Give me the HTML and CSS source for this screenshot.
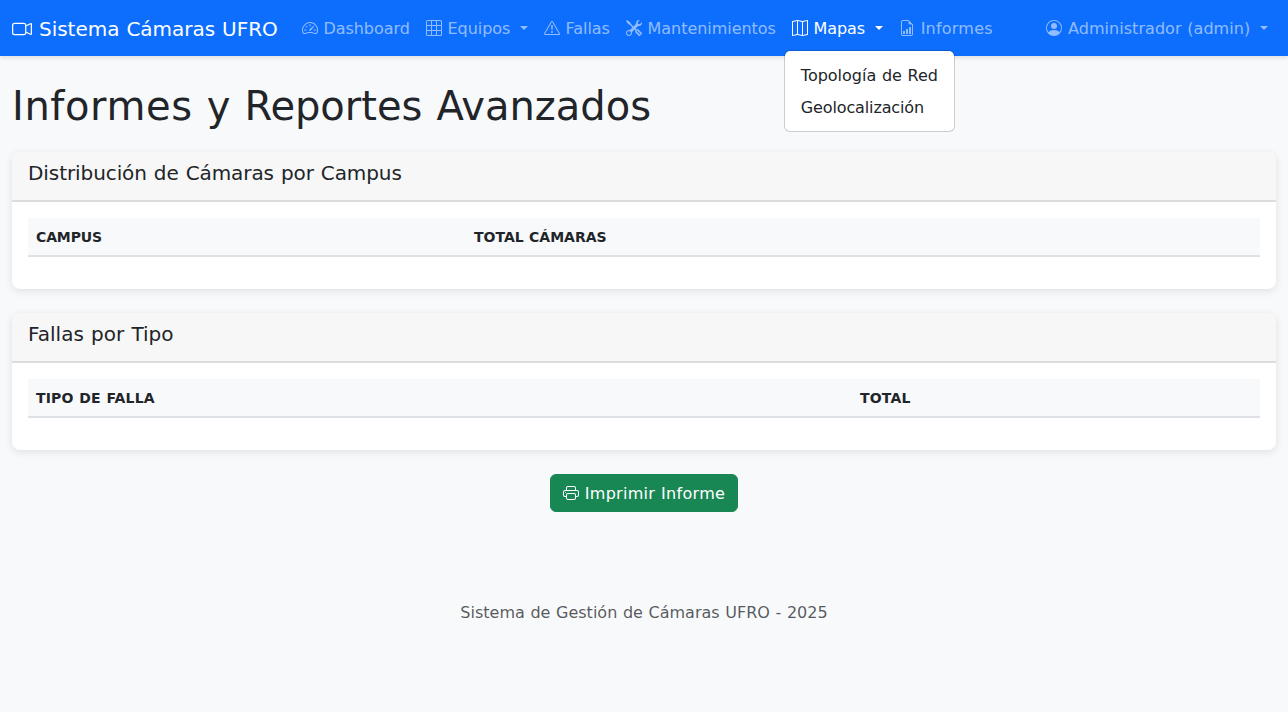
FILE: index.html
```html
<!DOCTYPE html>
<html lang="es">
<head>
<meta charset="utf-8">
<title>Informes y Reportes Avanzados</title>
<link rel="stylesheet" href="styles.css">
</head>
<body>
<nav class="navbar">
  <a class="brand"><svg class="bi" viewBox="0 0 16 16"><path fill-rule="evenodd" d="M0 5a2 2 0 0 1 2-2h7.5a2 2 0 0 1 1.983 1.738l3.11-1.382A1 1 0 0 1 16 4.269v7.462a1 1 0 0 1-1.406.913l-3.111-1.382A2 2 0 0 1 9.5 13H2a2 2 0 0 1-2-2zm11.5 5.175 3.5 1.556V4.269l-3.5 1.556zM2 4a1 1 0 0 0-1 1v6a1 1 0 0 0 1 1h7.5a1 1 0 0 0 1-1V5a1 1 0 0 0-1-1z"/></svg> Sistema Cámaras UFRO</a>
  <ul class="nav-list main-nav">
    <li><a class="nav-link"><svg class="bi" viewBox="0 0 16 16"><path d="M8 4a.5.5 0 0 1 .5.5V6a.5.5 0 0 1-1 0V4.5A.5.5 0 0 1 8 4M3.732 5.732a.5.5 0 0 1 .707 0l.915.914a.5.5 0 1 1-.708.708l-.914-.915a.5.5 0 0 1 0-.707M2 10a.5.5 0 0 1 .5-.5h1.586a.5.5 0 0 1 0 1H2.5A.5.5 0 0 1 2 10m9.5 0a.5.5 0 0 1 .5-.5h1.5a.5.5 0 0 1 0 1H12a.5.5 0 0 1-.5-.5m.754-4.246a.39.39 0 0 0-.527-.02L7.547 9.31a.91.91 0 1 0 1.302 1.258l3.434-4.297a.39.39 0 0 0-.029-.518z"/><path fill-rule="evenodd" d="M0 10a8 8 0 1 1 15.547 2.661c-.442 1.253-1.845 1.602-2.932 1.25C11.309 13.488 9.475 13 8 13c-1.474 0-3.31.488-4.615.911-1.087.352-2.49.003-2.932-1.25A8 8 0 0 1 0 10m8-7a7 7 0 0 0-6.603 9.329c.203.575.923.876 1.68.63C4.397 12.533 6.358 12 8 12s3.604.532 4.923.96c.757.245 1.477-.056 1.68-.631A7 7 0 0 0 8 3"/></svg> Dashboard</a></li>
    <li><a class="nav-link toggle"><svg class="bi" viewBox="0 0 16 16"><path d="M0 1.5A1.5 1.5 0 0 1 1.5 0h13A1.5 1.5 0 0 1 16 1.5v13a1.5 1.5 0 0 1-1.5 1.5h-13A1.5 1.5 0 0 1 0 14.5zM1.5 1a.5.5 0 0 0-.5.5V5h4V1zM5 6H1v4h4zm1 4h4V6H6zm-1 1H1v3.5a.5.5 0 0 0 .5.5H5zm1 0v4h4v-4zm5 0v4h3.5a.5.5 0 0 0 .5-.5V11zm0-1h4V6h-4zm0-5h4V1.5a.5.5 0 0 0-.5-.5H11zm-1 0V1H6v4z"/></svg> Equipos </a></li>
    <li><a class="nav-link"><svg class="bi" viewBox="0 0 16 16"><path d="M7.938 2.016A.13.13 0 0 1 8.002 2a.13.13 0 0 1 .063.016.15.15 0 0 1 .054.057l6.857 11.667c.036.06.035.124.002.183a.2.2 0 0 1-.054.06.1.1 0 0 1-.066.017H1.146a.1.1 0 0 1-.066-.017.2.2 0 0 1-.054-.06.18.18 0 0 1 .002-.183L7.884 2.073a.15.15 0 0 1 .054-.057m1.044-.45a1.13 1.13 0 0 0-1.96 0L.165 13.233c-.457.778.091 1.767.98 1.767h13.713c.889 0 1.438-.99.98-1.767z"/><path d="M7.002 12a1 1 0 1 1 2 0 1 1 0 0 1-2 0M7.1 5.995a.905.905 0 1 1 1.8 0l-.35 3.507a.552.552 0 0 1-1.1 0z"/></svg> Fallas</a></li>
    <li><a class="nav-link"><svg class="bi" viewBox="0 0 16 16"><path d="M1 0 0 1l2.2 3.081a1 1 0 0 0 .815.419h.07a1 1 0 0 1 .708.293l2.675 2.675-2.617 2.654A3.003 3.003 0 0 0 0 13a3 3 0 1 0 5.878-.851l2.654-2.617.968.968-.305.914a1 1 0 0 0 .242 1.023l3.27 3.27a.997.997 0 0 0 1.414 0l1.586-1.586a.997.997 0 0 0 0-1.414l-3.27-3.27a1 1 0 0 0-1.023-.242L10.5 9.5l-.96-.96 2.68-2.643A3.005 3.005 0 0 0 16 3q0-.405-.102-.777l-2.14 2.141L12 4l-.364-1.757L13.777.102a3 3 0 0 0-3.675 3.68L7.462 6.46 4.793 3.793a1 1 0 0 1-.293-.707v-.071a1 1 0 0 0-.419-.814zm9.646 10.646a.5.5 0 0 1 .708 0l2.914 2.915a.5.5 0 0 1-.707.707l-2.915-2.914a.5.5 0 0 1 0-.708M3 11l.471.242.529.026.287.445.445.287.026.529L5 13l-.242.471-.026.529-.445.287-.287.445-.529.026L3 15l-.471-.242L2 14.732l-.287-.445L1.268 14l-.026-.529L1 13l.242-.471.026-.529.445-.287.287-.445.529-.026z"/></svg> Mantenimientos</a></li>
    <li class="dropdown"><a class="nav-link toggle show"><svg class="bi" viewBox="0 0 16 16"><path fill-rule="evenodd" d="M15.817.113A.5.5 0 0 1 16 .5v14a.5.5 0 0 1-.402.49l-5 1a.5.5 0 0 1-.196 0L5.5 15.01l-4.902.98A.5.5 0 0 1 0 15.5v-14a.5.5 0 0 1 .402-.49l5-1a.5.5 0 0 1 .196 0L10.5.99l4.902-.98a.5.5 0 0 1 .415.103M10 1.91l-4-.8v12.98l4 .8zm1 12.98 4-.8V1.11l-4 .8zm-6-.8V1.11l-4 .8v12.98z"/></svg> Mapas </a>
      <ul class="menu">
        <li class="menu-item">Topología de Red</li>
        <li class="menu-item geo">Geolocalización</li>
      </ul>
    </li>
    <li><a class="nav-link reports"><svg class="bi" viewBox="0 0 16 16"><path d="M10 13.5a.5.5 0 0 0 .5.5h1a.5.5 0 0 0 .5-.5v-6a.5.5 0 0 0-.5-.5h-1a.5.5 0 0 0-.5.5zm-2.5.5a.5.5 0 0 1-.5-.5v-4a.5.5 0 0 1 .5-.5h1a.5.5 0 0 1 .5.5v4a.5.5 0 0 1-.5.5zm-3 0a.5.5 0 0 1-.5-.5v-2a.5.5 0 0 1 .5-.5h1a.5.5 0 0 1 .5.5v2a.5.5 0 0 1-.5.5z"/><path d="M14 14V4.5L9.5 0H4a2 2 0 0 0-2 2v12a2 2 0 0 0 2 2h8a2 2 0 0 0 2-2M9.5 3A1.5 1.5 0 0 0 11 4.5h2V14a1 1 0 0 1-1 1H4a1 1 0 0 1-1-1V2a1 1 0 0 1 1-1h5.5z"/></svg> Informes</a></li>
  </ul>
  <ul class="nav-list user">
    <li><a class="nav-link toggle"><svg class="bi" viewBox="0 0 16 16"><path d="M11 6a3 3 0 1 1-6 0 3 3 0 0 1 6 0"/><path fill-rule="evenodd" d="M0 8a8 8 0 1 1 16 0A8 8 0 0 1 0 8m8-7a7 7 0 0 0-5.468 11.37C3.242 11.226 4.805 10 8 10s4.757 1.225 5.468 2.37A7 7 0 0 0 8 1"/></svg> Administrador (admin) </a></li>
  </ul>
</nav>
<main class="container">
  <h1 class="title"><span class="title-lead">Informes</span> y Reportes Avanzados</h1>
  <section class="card">
    <div class="card-header"><h5 class="card-title campus-title">Distribución de Cámaras por Campus</h5></div>
    <div class="card-body">
      <table class="table campus-table"><thead><tr><th>Campus</th><th>Total Cámaras</th></tr></thead><tbody></tbody></table>
    </div>
  </section>
  <section class="card">
    <div class="card-header"><h5 class="card-title">Fallas por Tipo</h5></div>
    <div class="card-body">
      <table class="table faults-table"><thead><tr><th>Tipo de Falla</th><th>Total</th></tr></thead><tbody></tbody></table>
    </div>
  </section>
  <div class="actions">
    <button class="btn"><svg class="bi" viewBox="0 0 16 16"><path d="M2.5 8a.5.5 0 1 0 0-1 .5.5 0 0 0 0 1"/><path d="M5 1a2 2 0 0 0-2 2v2H2a2 2 0 0 0-2 2v3a2 2 0 0 0 2 2h1v1a2 2 0 0 0 2 2h6a2 2 0 0 0 2-2v-1h1a2 2 0 0 0 2-2V7a2 2 0 0 0-2-2h-1V3a2 2 0 0 0-2-2zM4 3a1 1 0 0 1 1-1h6a1 1 0 0 1 1 1v2H4zm1 5a2 2 0 0 0-2 2v1H2a1 1 0 0 1-1-1V7a1 1 0 0 1 1-1h12a1 1 0 0 1 1 1v3a1 1 0 0 1-1 1h-1v-1a2 2 0 0 0-2-2zm7 2v3a1 1 0 0 1-1 1H5a1 1 0 0 1-1-1v-3a1 1 0 0 1 1-1h6a1 1 0 0 1 1 1"/></svg> Imprimir Informe</button>
  </div>
</main>
<footer class="footer">Sistema de Gestión de Cámaras UFRO - 2025</footer>
</body>
</html>
```
FILE: styles.css
```css
*, *::before, *::after { box-sizing: border-box; }

body {
  margin: 0;
  font-family: Verdana, "DejaVu Sans", sans-serif;
  font-size: 16px;
  line-height: 1.5;
  word-spacing: 0.55px;
  color: #212529;
  background: #f8f9fa;
}

ul { list-style: none; margin: 0; padding: 0; }

.bi {
  width: 1em;
  height: 1em;
  fill: currentColor;
  vertical-align: -0.125em;
}

/* Navigation */
.navbar {
  display: flex;
  align-items: center;
  height: 56px;
  padding: 8px 12px;
  background: #0d6efd;
  box-shadow: 0 2px 4px rgba(0, 0, 0, 0.1);
}

.brand {
  margin-right: 16px;
  padding-top: 2px;
  font-size: 20px;
  letter-spacing: -0.02px;
  word-spacing: 0.65px;
  color: #fff;
  white-space: nowrap;
}

.nav-list { display: flex; }
.main-nav { letter-spacing: -0.04px; }
.user { margin-left: auto; letter-spacing: 0.05px; }

.nav-link {
  display: block;
  padding: 9px 8px 7px;
  color: rgba(255, 255, 255, 0.55);
  white-space: nowrap;
}

.nav-link.show { color: #fff; }
.reports { letter-spacing: 0.22px; }

.toggle::after {
  content: "";
  display: inline-block;
  margin-left: 0.255em;
  vertical-align: 0.255em;
  border-top: 0.3em solid;
  border-right: 0.3em solid transparent;
  border-left: 0.3em solid transparent;
}

.dropdown { position: relative; }

.menu {
  position: absolute;
  z-index: 10;
  top: calc(100% + 2px);
  left: 0;
  padding: 9px 0 7px;
  letter-spacing: 0;
  background: #fff;
  background-clip: padding-box;
  border: 1px solid rgba(0, 0, 0, 0.175);
  border-radius: 6px;
}

.menu-item { padding: 4px 16px; white-space: nowrap; }
.geo { letter-spacing: -0.13px; }

/* Content */
.container { padding: 26px 12px 0; }

.title {
  margin: 0 0 22px;
  font-size: 40px;
  font-weight: 400;
  line-height: 1.2;
  letter-spacing: -0.02px;
  word-spacing: 1.36px;
}

.title-lead { letter-spacing: 0.6px; }

.card {
  margin-bottom: 24px;
  background: #fff;
  border-radius: 8px;
  box-shadow: 0 2px 8px rgba(0, 0, 0, 0.1);
}

.card-header {
  padding: 9px 16px 7px;
  background: rgba(0, 0, 0, 0.03);
  border-bottom: 2px solid rgba(0, 0, 0, 0.11);
  border-radius: 8px 8px 0 0;
}

.card-title {
  margin: 0 0 8px;
  font-size: 20px;
  font-weight: 400;
  line-height: 1.2;
  letter-spacing: 0.04px;
  word-spacing: 0.68px;
}

.campus-title { letter-spacing: -0.08px; }

.card-body { padding: 16px; }

.table {
  width: 100%;
  margin-bottom: 16px;
  table-layout: fixed;
  border-collapse: collapse;
}

.table th {
  padding: 9px 8px 7px;
  font-size: 14px;
  font-weight: 600;
  text-align: left;
  text-transform: uppercase;
  background: #f8f9fa;
  border-bottom: 2px solid #dee2e6;
}

.campus-table th:first-child { width: 35.55%; letter-spacing: -0.12px; }
.faults-table th { letter-spacing: 0.18px; }
.faults-table th:first-child { width: 66.88%; }

.actions { text-align: center; }

.btn {
  padding: 7px 12px 5px;
  font: inherit;
  letter-spacing: 0.29px;
  word-spacing: 0.55px;
  color: #fff;
  background: #198754;
  border: 1px solid #198754;
  border-radius: 6px;
}

.footer {
  padding: 89px 12px 24px;
  text-align: center;
  color: rgba(33, 37, 41, 0.75);
}
```
